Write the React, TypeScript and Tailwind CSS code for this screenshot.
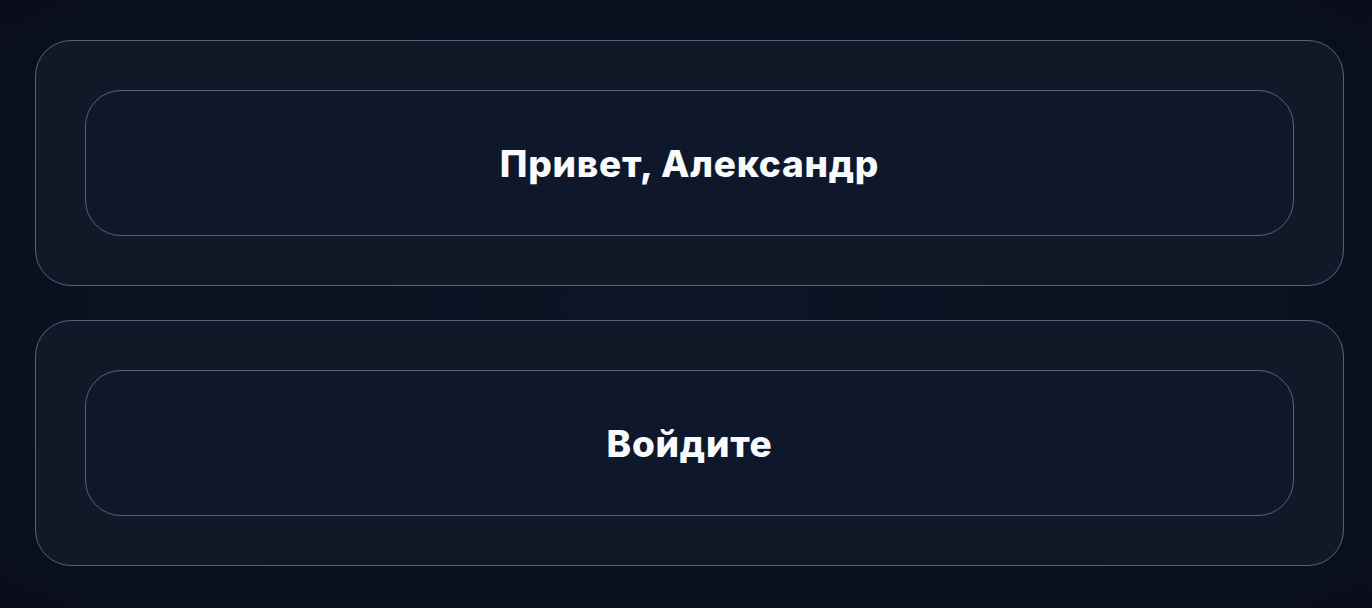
const cards = ['Привет, Александр', 'Войдите'];

export default function App() {
  return (
    <div
      className="flex min-h-[608px] flex-col gap-[34px] bg-[radial-gradient(ellipse_at_center,#0e1425_0%,#0b1120_60%,#090e1a_100%)] pb-[42px] pl-[35px] pr-[28px] pt-[40px]"
      style={{ fontFamily: 'Inter, "Noto Sans", sans-serif' }}
    >
      {cards.map((title) => (
        <section key={title} className="rounded-[36px] border border-[#56637a] bg-[#111828] p-[49px]">
          <div className="flex h-[146px] items-center justify-center rounded-[36px] border border-[#56637a] bg-[#0f172a]">
            <h2 className="text-[37px] font-extrabold leading-none tracking-[0.02em] text-[#f8fafc]">{title}</h2>
          </div>
        </section>
      ))}
    </div>
  );
}
